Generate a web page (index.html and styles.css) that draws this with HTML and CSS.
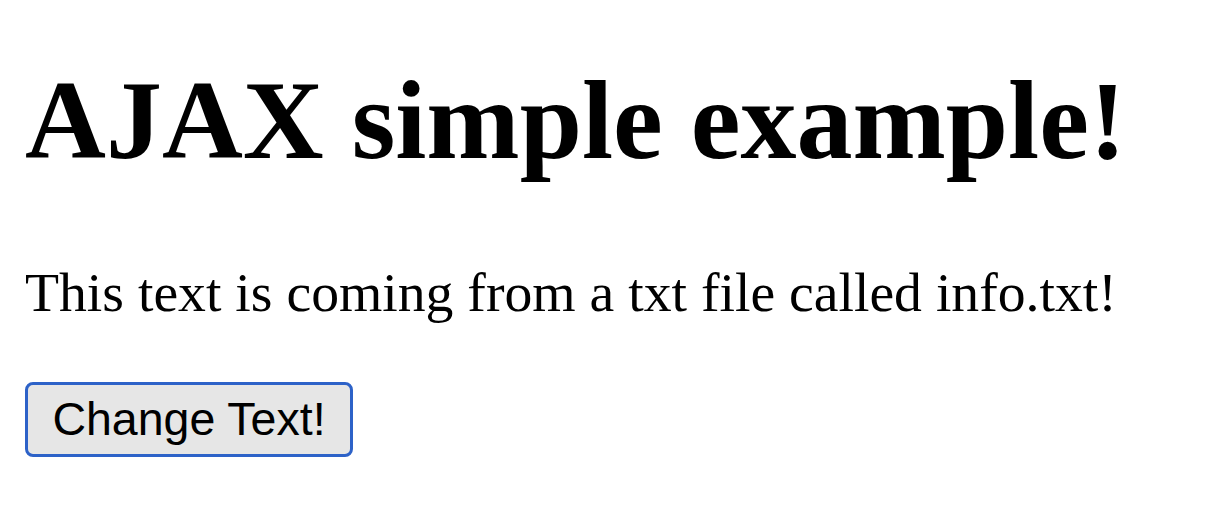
FILE: index.html
```html
<!DOCTYPE html>
<html>
<head>
<meta charset="utf-8">
<title>AJAX simple example</title>
<link rel="stylesheet" href="styles.css">
</head>
<body>
<h1 class="title">AJAX simple example!</h1>
<p class="info">This text is coming from a txt file called info.txt!</p>
<button class="change-btn" type="button">Change Text!</button>
</body>
</html>
```
FILE: styles.css
```css
html, body {
  margin: 0;
  padding: 0;
  background: #ffffff;
}
body {
  padding: 0 0 0 25px;
  font-family: "Liberation Serif", "Times New Roman", serif;
  color: #000000;
}
.title {
  margin: 64px 0 0 0;
  font-size: 112px;
  font-weight: bold;
  line-height: 1;
  white-space: nowrap;
}
.info {
  margin: 89px 0 0 0;
  font-size: 55.7px;
  line-height: 1;
  white-space: nowrap;
}
.change-btn {
  display: block;
  margin: 61px 0 0 0;
  width: 328px;
  height: 75px;
  padding: 0;
  border: 3px solid #2d62c8;
  border-radius: 8px;
  background: #e6e6e6;
  font-family: "Liberation Sans", Arial, sans-serif;
  font-size: 46.5px;
  color: #000000;
  line-height: 1;
}
```
